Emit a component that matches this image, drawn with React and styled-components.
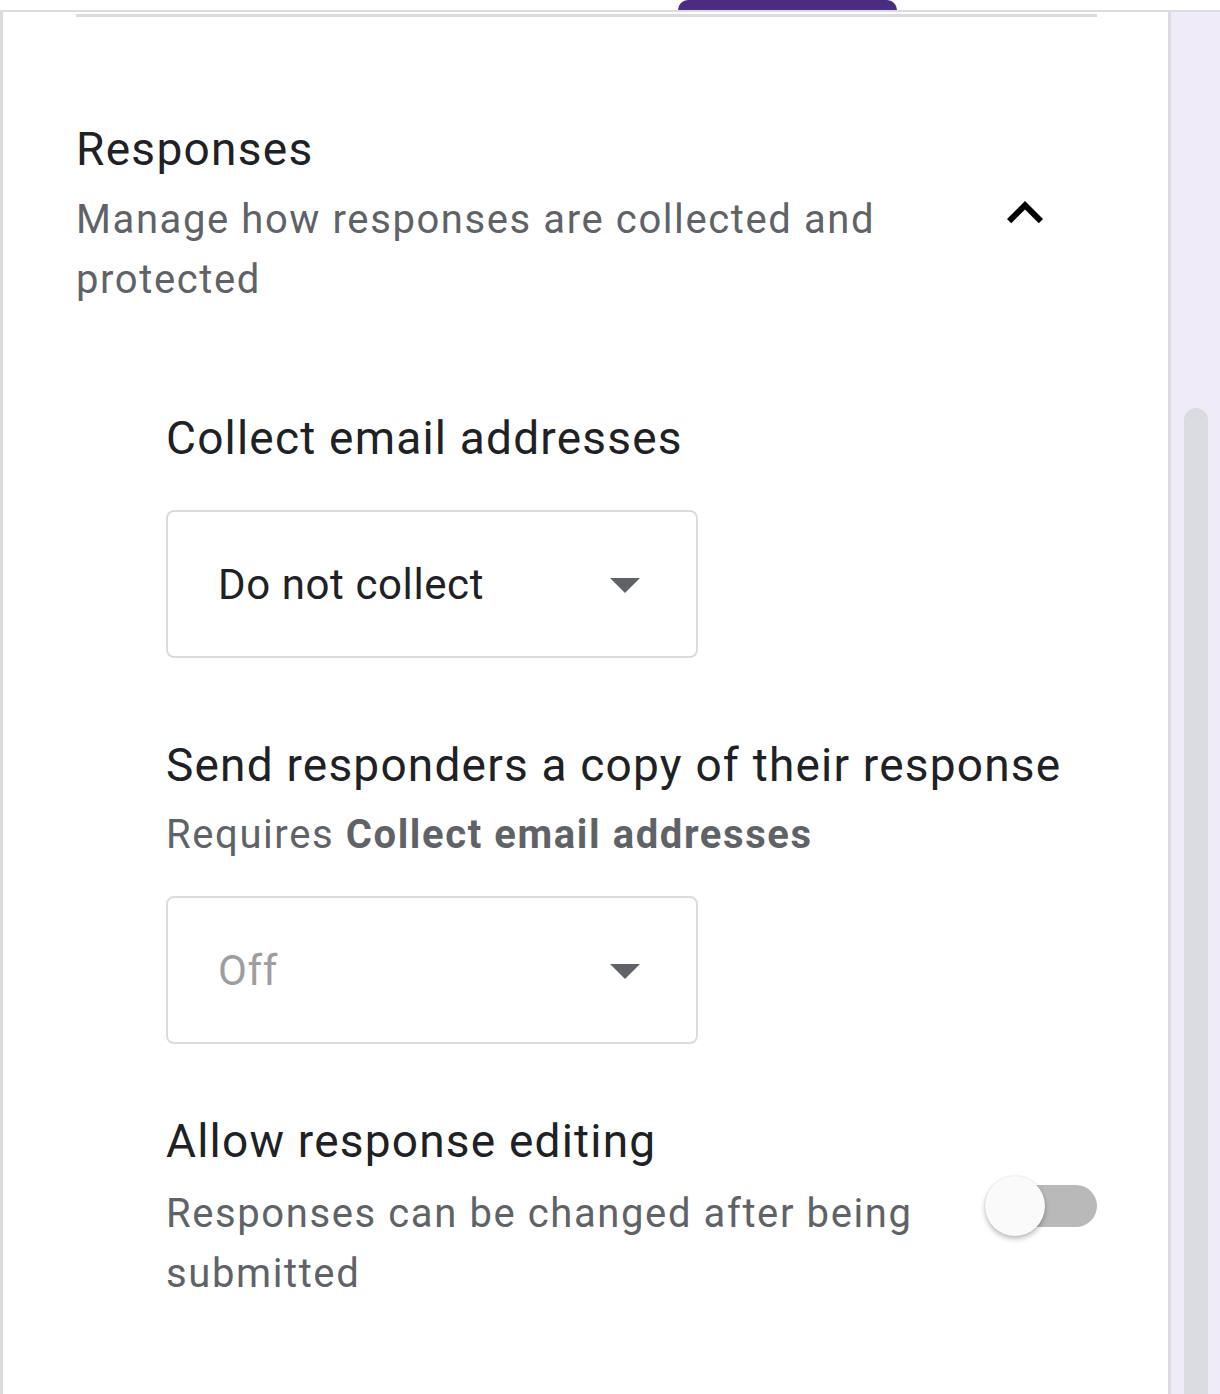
import styled, { createGlobalStyle } from "styled-components";

const Global = createGlobalStyle`
  body {
    margin: 0;
    background: #f0ebf8;
    font-family: Roboto, "Liberation Sans", sans-serif;
  }
`

const TopStrip = styled.div`
  height: 10px;
  background: #fff;
  border-bottom: 2px solid #dadce0;
  display: flex;
  padding-left: 678px;
`

const TabIndicator = styled.div`
  width: 219px;
  height: 10px;
  background: #4a2c82;
  border-radius: 10px 10px 0 0;
`

const Body = styled.div`
  display: flex;
  align-items: stretch;
  min-height: 1382px;
`

const Panel = styled.div`
  width: 1171px;
  box-sizing: border-box;
  background: #fff;
  border-left: 3px solid #dadce0;
  border-right: 3px solid #dadce0;
  padding: 2px 71px 0 73px;
`

const Divider = styled.div`
  height: 3px;
  background: #dadce0;
`

const Rail = styled.div`
  flex: 1;
  display: flex;
  padding: 396px 0 0 13px;
`

const Thumb = styled.div`
  width: 24px;
  background: #dadce0;
  border-radius: 12px 12px 0 0;
`

const SectionHead = styled.div`
  display: flex;
  align-items: center;
  margin-top: 104px;
`

const HeadText = styled.div`
  flex: 1;
  padding-right: 60px;
`

const Title = styled.div`
  font-size: 46px;
  line-height: 56px;
  color: #202124;
  letter-spacing: 1.3px;
`

const Desc = styled.div`
  font-size: 40px;
  line-height: 60px;
  color: #5f6368;
  letter-spacing: 1.6px;
  margin-top: ${(props) => props.gap || 0}px;
  flex: 1;

  b {
    font-weight: 700;
  }
`

const IconButton = styled.div`
  width: 72px;
  height: 72px;
  margin: -6px 36px 0 0;
  display: flex;
  svg {
    width: 72px;
    height: 72px;
  }
`

const Settings = styled.div`
  padding-left: 90px;
`

const Setting = styled.div`
  margin-top: ${(props) => props.top}px;
`

const Label = styled.div`
  font-size: 46px;
  line-height: 56px;
  color: #202124;
  letter-spacing: 1.2px;
`

const Select = styled.div`
  width: 532px;
  height: 148px;
  box-sizing: border-box;
  border: 2.5px solid #dadce0;
  border-radius: 8px;
  margin-top: ${(props) => props.top}px;
  display: flex;
  align-items: center;
  padding: 0 35px 0 50px;
  font-size: 42px;
  letter-spacing: 0.6px;
  color: ${(props) => (props.muted ? "#9e9e9e" : "#202124")};

  span {
    flex: 1;
  }
  svg {
    width: 72px;
    height: 72px;
    fill: #5f6368;
  }
`

const ToggleRow = styled.div`
  display: flex;
  align-items: flex-start;
  margin-top: 15px;
`

const Toggle = styled.div`
  width: 112px;
  height: 60px;
  margin-top: -8px;
  display: flex;
  align-items: center;
  position: relative;
`

const Track = styled.div`
  margin-left: 4px;
  width: 108px;
  height: 42px;
  border-radius: 21px;
  background: #b9b9b9;
`

const Knob = styled.div`
  position: absolute;
  left: 0;
  top: 0;
  width: 60px;
  height: 60px;
  border-radius: 50%;
  background: #fafafa;
  box-shadow: 0 3px 5px rgba(0, 0, 0, 0.25), 0 0 2px rgba(0, 0, 0, 0.12);
`

const Arrow = () => (
  <svg viewBox="0 0 24 24">
    <path d="M7 10l5 5 5-5z" />
  </svg>
)

function App() {
  return (
    <>
      <Global />
      <TopStrip>
        <TabIndicator />
      </TopStrip>
      <Body>
        <Panel>
          <Divider />
          <SectionHead>
            <HeadText>
              <Title>Responses</Title>
              <Desc gap={13}>Manage how responses are collected and protected</Desc>
            </HeadText>
            <IconButton>
              <svg viewBox="0 0 24 24">
                <path d="M12 8l-6 6 1.41 1.41L12 10.83l4.59 4.58L18 14z" fill="#000" />
              </svg>
            </IconButton>
          </SectionHead>

          <Settings>
            <Setting top={100}>
              <Label>Collect email addresses</Label>
              <Select top={44}>
                <span>Do not collect</span>
                <Arrow />
              </Select>
            </Setting>

            <Setting top={79}>
              <Label>Send responders a copy of their response</Label>
              <Desc gap={12}>
                Requires <b>Collect email addresses</b>
              </Desc>
              <Select top={31} muted>
                <span>Off</span>
                <Arrow />
              </Select>
            </Setting>

            <Setting top={69}>
              <Label>Allow response editing</Label>
              <ToggleRow>
                <Desc>Responses can be changed after being submitted</Desc>
                <Toggle>
                  <Track />
                  <Knob />
                </Toggle>
              </ToggleRow>
            </Setting>
          </Settings>
        </Panel>
        <Rail>
          <Thumb />
        </Rail>
      </Body>
    </>
  )
}

export default App;
